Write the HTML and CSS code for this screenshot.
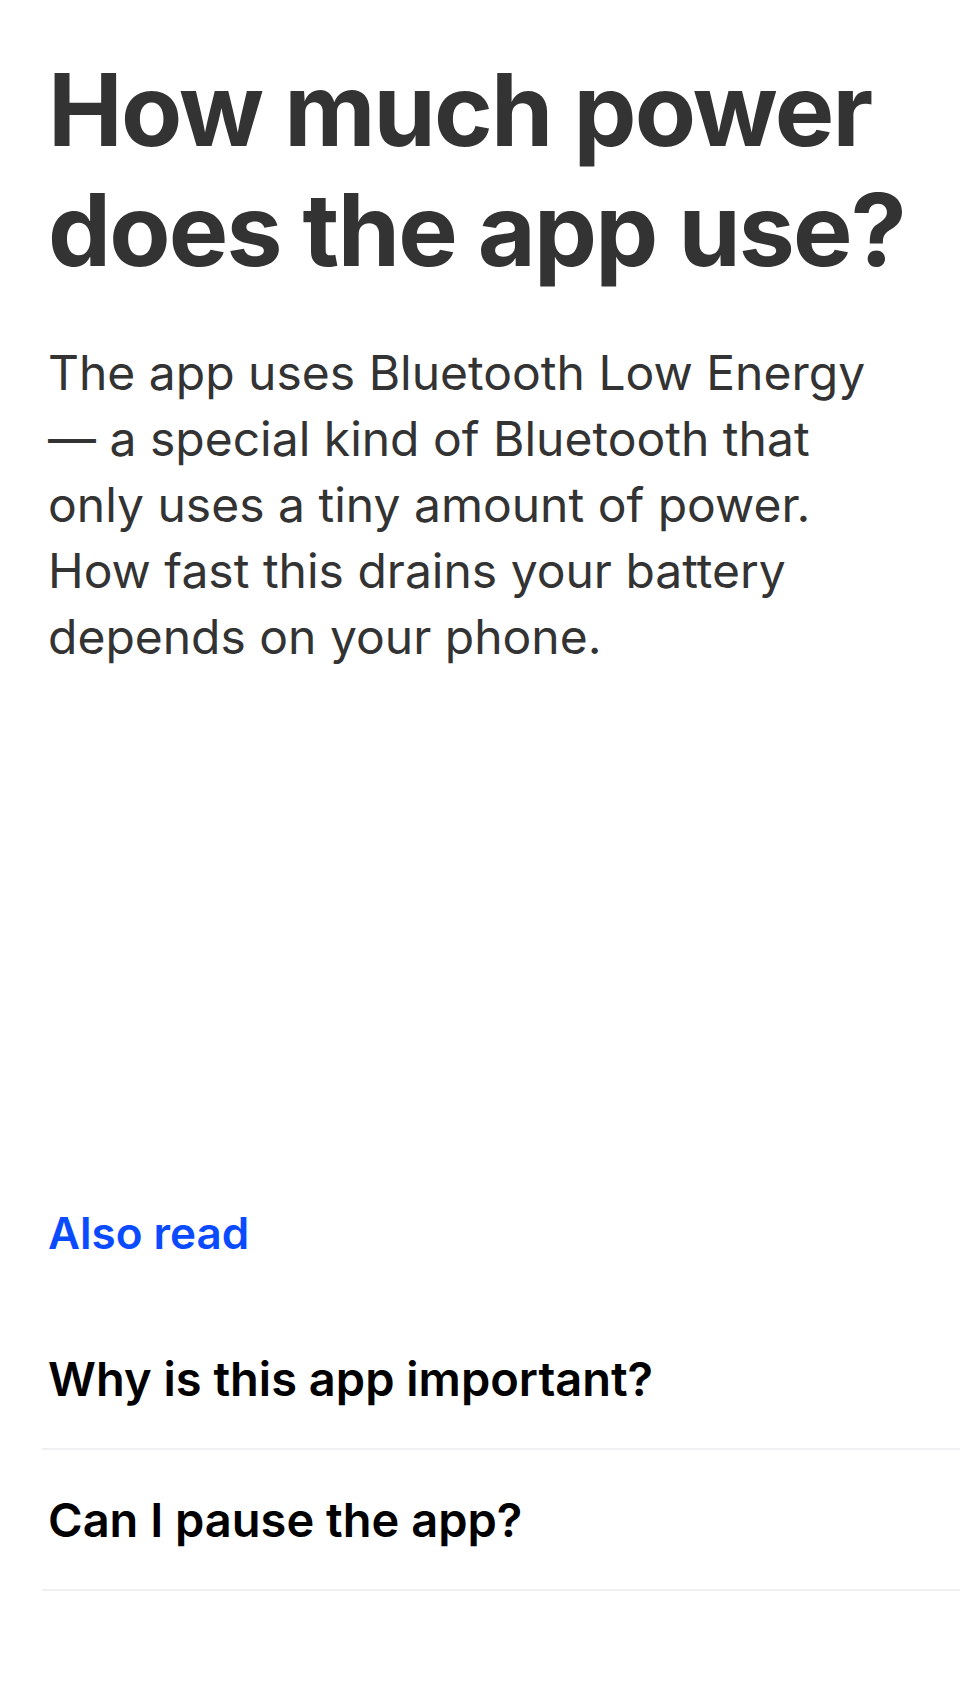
FILE: index.html
```html
<!DOCTYPE html>
<html lang="en">
<head>
<meta charset="utf-8">
<title>How much power does the app use?</title>
<link rel="stylesheet" href="styles.css">
</head>
<body>
<main class="page">
  <article class="article">
    <h1 class="title">How much power does the app use?</h1>
    <p class="lead">The app uses Bluetooth Low Energy — a special kind of Bluetooth that only uses a tiny amount of power. How fast this drains your battery depends on your phone.</p>
  </article>
  <section class="related">
    <h2 class="related-title">Also read</h2>
    <ul class="related-list">
      <li class="related-item"><a class="related-link" href="#">Why is this app important?</a></li>
      <li class="related-item"><a class="related-link" href="#">Can I pause the app?</a></li>
    </ul>
  </section>
</main>
</body>
</html>
```

FILE: styles.css
```css
html, body {
  margin: 0;
  padding: 0;
  background: #ffffff;
}

body {
  font-family: Inter, "Noto Sans", "Liberation Sans", sans-serif;
  -webkit-font-smoothing: antialiased;
}

.page {
  display: flex;
  flex-direction: column;
  min-height: 1704px;
  box-sizing: border-box;
}

.article {
  padding: 0 12px 0 48px;
}

.title {
  margin: 50px 0 0;
  font-size: 100px;
  line-height: 120px;
  font-weight: 700;
  color: #333333;
  letter-spacing: -1.8px;
}

.lead {
  margin: 50px 0 0;
  font-size: 48px;
  line-height: 66px;
  font-weight: 400;
  color: #333333;
  max-width: 830px;
}

.related {
  margin-top: auto;
  padding-bottom: 113px;
}

.related-title {
  margin: 0 0 48px 48px;
  font-size: 44px;
  line-height: 56px;
  font-weight: 600;
  color: #0a4bff;
}

.related-list {
  list-style: none;
  margin: 0 0 0 42px;
  padding: 0;
}

.related-item {
  border-bottom: 2px solid #efeff4;
}

.related-link {
  display: block;
  padding-left: 6px;
  height: 139px;
  line-height: 139px;
  font-size: 47px;
  font-weight: 600;
  color: #000000;
  text-decoration: none;
}
```
